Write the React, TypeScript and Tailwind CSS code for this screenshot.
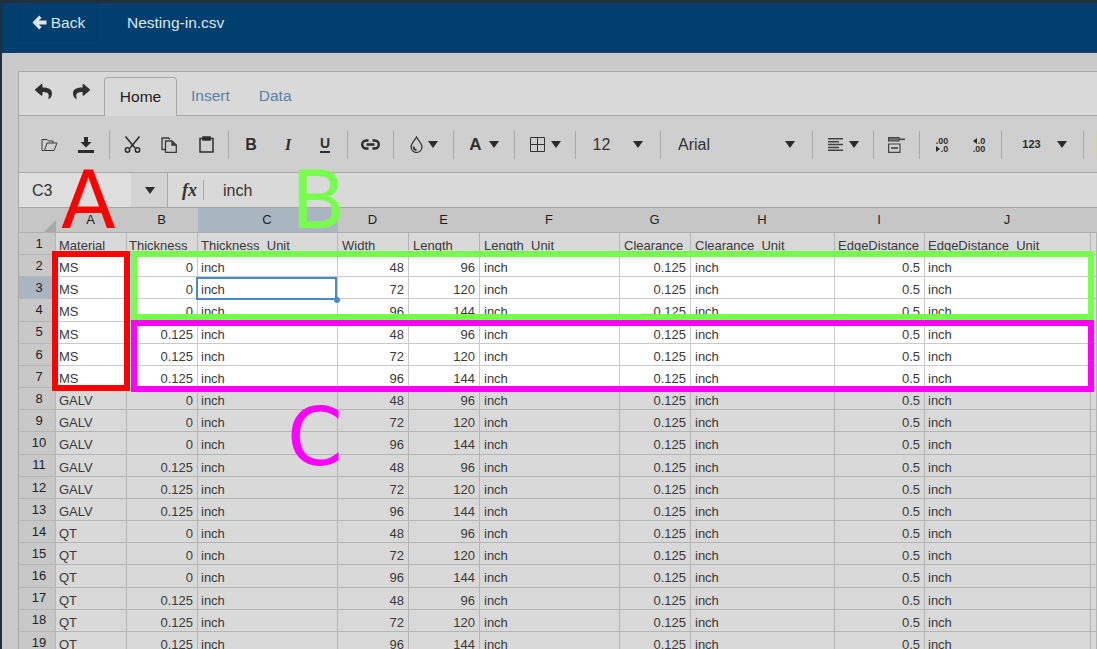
import { ReactNode } from "react";
import { FaReply, FaShare } from "react-icons/fa";

const columns = ["A", "B", "C", "D", "E", "F", "G", "H", "I", "J", ""];
const headers = ["Material", "Thickness", "Thickness_Unit", "Width", "Length", "Length_Unit", "Clearance", "Clearance_Unit", "EdgeDistance", "EdgeDistance_Unit", ""];
const gridCols = "grid grid-cols-[37px_71px_71px_140px_71px_71px_140px_71px_144px_90px_166px_1fr]";

const thick = ["0", "0", "0", "0.125", "0.125", "0.125"];
const widths = ["48", "72", "96"];
const lengths = ["96", "120", "144"];

function rowData(i: number) {
  const material = i < 6 ? "MS" : i < 12 ? "GALV" : "QT";
  return [material, thick[i % 6], "inch", widths[i % 3], lengths[i % 3], "inch", "0.125", "inch", "0.5", "inch", ""];
}

function Caret() {
  return <span className="h-0 w-0 border-x-[5px] border-t-[7px] border-x-transparent border-t-[#2b2b2b]" />;
}

function Group({ className, children }: { className: string; children: ReactNode }) {
  return <div className={`flex h-7 shrink-0 items-center border-r border-[#a8a8a8] ${className}`}>{children}</div>;
}

function Btn({ children }: { children: ReactNode }) {
  return <div className="flex h-7 w-[37px] items-center justify-center text-[#2f2f2f]">{children}</div>;
}

function Cell({ text, index, lit, head }: { text: string; index: number; lit: boolean; head: boolean }) {
  const right = !head && (index === 1 || index === 3 || index === 4 || index === 6 || index === 8);
  let pad = "pl-[4px]";
  if (right) pad = "justify-end pr-1";
  else if (index === 0 || index === 2 || index === 9) pad = "pl-[3px]";
  else if (head && index === 1) pad = "pl-[2px]";
  else if (head && index === 8) pad = "pl-[3px]";
  return (
    <div
      className={`flex overflow-hidden whitespace-nowrap border-r border-b pt-[4px] text-[13px] leading-[18px] text-[#3a3a3a] ${pad} ${
        lit ? "border-[#c9c9c9] bg-white" : "border-[#b5b5b5] bg-[#d9d9d9]"
      }`}
    >
      {text}
    </div>
  );
}

function Row({ n, cells, lit }: { n: number; cells: string[]; lit: boolean }) {
  return (
    <div className={`${gridCols} h-[22.17px]`}>
      <div
        className={`flex items-center justify-center border-r border-b border-[#b5b5b5] pl-1 text-[13px] text-[#222] ${
          n === 3 ? "bg-[#a9b6c1]" : "bg-[#c8c8c8]"
        }`}
      >
        {n}
      </div>
      {cells.map((c, i) => (
        <Cell key={i} text={c} index={i} lit={lit && i < 10} head={n === 1} />
      ))}
    </div>
  );
}

export default function App() {
  return (
    <div className="relative h-[649px] w-[1097px] overflow-hidden bg-[#22303c] pt-[3px] pl-[2px] font-['Liberation_Sans',sans-serif]">
      <header className="flex h-[50px] items-start bg-[#003f6e] pl-4 text-[15.5px] text-[#dde6ec]">
        <div className="mt-px flex h-[37px] w-[80px] items-center justify-center gap-1 border border-[#00396a] pl-px">
          <svg width="15" height="15" viewBox="0 0 15 15" fill="#dde6ec">
            <path d="M7.2 .5 9.600 2.900 6.800 5.500H14.500V9.500H6.800L9.600 12.100 7.200 14.500 .5 7.500Z" />
          </svg>
          Back
        </div>
        <div className="mt-px ml-[29px] flex h-[37px] items-center">Nesting-in.csv</div>
      </header>

      <main className="h-[596px] bg-[#cacaca] pt-[18px] pl-4">
        <section className="border-t border-l border-[#a8a8a8] bg-[#d9d9d9]">
          {/* tabs */}
          <div className="flex h-[43px] items-end pl-[85px] text-[15.5px]">
            <div className="absolute top-[83px] left-[35px] flex gap-[21px] text-[17px] text-[#2f2f2f]">
              <FaReply />
              <FaShare />
            </div>
            <div className="-mb-px flex h-[39px] w-[73px] items-center justify-center rounded-t border border-b-0 border-[#a8a8a8] bg-[#d9d9d9] pb-px text-[#222]">
              Home
            </div>
            <div className="ml-[14px] flex h-[39px] items-center text-[#5a80aa]">Insert</div>
            <div className="ml-[29px] flex h-[39px] items-center text-[#5a80aa]">Data</div>
          </div>

          {/* ribbon */}
          <div className="flex h-[58px] items-center border-y border-[#a8a8a8] bg-[#cfcfcf] pt-px">
            <Group className="w-[91px] justify-center pl-[7px]">
              <Btn>
                <svg width="17" height="13" viewBox="0 0 17 13" fill="none" stroke="#3a3a3a" strokeWidth="1">
                  <path d="M3.500 12.500H1V1.500H6L7.500 3H12V5M3.500 12.500L6 5H16L13 12.500Z" />
                </svg>
              </Btn>
              <Btn>
                <svg width="18" height="16" viewBox="0 0 18 16" fill="#2b2b2b">
                  <path d="M7 0H11V5H14.500L9 10.500 3.500 5H7ZM1 13H17V16H1Z" />
                </svg>
              </Btn>
            </Group>
            <Group className="w-[119px] justify-center">
              <Btn>
                <svg width="17" height="17" viewBox="0 0 17 17" fill="none" stroke="#2b2b2b" strokeWidth="1.500">
                  <path d="M1.500 0.500 11 12M15.500 0.500 6 12" />
                  <circle cx="3.500" cy="14" r="2.200" />
                  <circle cx="13.500" cy="14" r="2.200" />
                </svg>
              </Btn>
              <Btn>
                <svg width="16" height="16" viewBox="0 0 16 16" fill="none" stroke="#3a3a3a" strokeWidth="1.300">
                  <path d="M4.500 12.500H1V1H7.500L9 2.500" />
                  <path d="M4.500 4H11L15.300 8V15.300H4.500Z" />
                  <path d="M11 4V8H15.300" fill="#3a3a3a" />
                </svg>
              </Btn>
              <Btn>
                <svg width="15" height="17" viewBox="0 0 15 17" fill="none" stroke="#2f2f2f" strokeWidth="1.500">
                  <path d="M4 2.500H1V16H14V2.500H11" />
                  <path d="M4 1H11V4H4Z" fill="#2f2f2f" />
                </svg>
              </Btn>
            </Group>
            <Group className="w-[119px] justify-center text-[16px]">
              <Btn>
                <b>B</b>
              </Btn>
              <Btn>
                <i className="font-['Liberation_Serif',serif] font-bold">I</i>
              </Btn>
              <Btn>
                <span className="border-b-2 border-[#2f2f2f] text-[14px] leading-[15px] font-bold">U</span>
              </Btn>
            </Group>
            <Group className="w-[46px] justify-center">
              <svg width="19" height="11" viewBox="0 0 19 11" fill="none" stroke="#2b2b2b" strokeWidth="2.400">
                <path d="M7.500 1.500H5.200A4 4 0 0 0 5.200 9.500H7.500M11.500 1.500H13.800A4 4 0 0 1 13.800 9.500H11.500M5.500 5.500H13.500" />
              </svg>
            </Group>
            <Group className="w-[60px] justify-center gap-[5px]">
              <svg width="13" height="17" viewBox="0 0 13 17" fill="none" stroke="#333" strokeWidth="1.200">
                <path d="M6.500 1C8 4 12 7.500 12 11A5.500 5.500 0 0 1 1 11C1 7.500 5 4 6.500 1Z" />
                <path d="M3.500 10.500C3.500 13 5 14 6.500 14" strokeWidth="1.800" />
              </svg>
              <Caret />
            </Group>
            <Group className="w-[61px] justify-center gap-[7px] text-[17px] font-bold text-[#2f2f2f]">
              A
              <Caret />
            </Group>
            <Group className="w-[61px] justify-center gap-[6px]">
              <svg width="15" height="15" viewBox="0 0 15 15" fill="none" stroke="#333" strokeWidth="1">
                <path d="M.5.500H14.500V14.500H.5ZM7.500.500V14.500M.5 7.500H14.500" />
              </svg>
              <Caret />
            </Group>
            <Group className="w-[85px] justify-center gap-[23px] text-[16px] text-[#333]">
              12
              <Caret />
            </Group>
            <Group className="w-[152px] justify-between pr-[17px] pl-[17px] text-[16px] text-[#333]">
              Arial
              <Caret />
            </Group>
            <Group className="w-[61px] justify-center gap-[6px]">
              <svg width="15" height="13" viewBox="0 0 15 13" fill="#444">
                <path d="M0 0H15V1.500H0ZM0 2.900H11V4.400H0ZM0 5.800H15V7.300H0ZM0 8.700H11V10.200H0ZM0 11.500H15V13H0Z" />
              </svg>
              <Caret />
            </Group>
            <Group className="w-[46px] justify-center">
              <svg width="17" height="16" viewBox="0 0 17 16" fill="none" stroke="#444" strokeWidth="1.200">
                <path d="M.6.6H11V4H.6Z" fill="#777" />
                <path d="M11 2.300H17" strokeWidth="1.600" />
                <path d="M.6 7H12V15.400H.6Z" />
                <path d="M3 11H10" strokeWidth="1.600" />
              </svg>
            </Group>
            <Group className="w-[82px] justify-center text-[9px] leading-[8px] font-bold text-[#333]">
              <Btn>
                <span className="flex flex-col items-end">
                  <span>.00</span>
                  <span className="flex items-center gap-px">
                    <span className="h-0 w-0 border-y-[3.5px] border-l-[4px] border-y-transparent border-l-[#2b2b2b]" />
                    .0
                  </span>
                </span>
              </Btn>
              <Btn>
                <span className="flex flex-col items-end">
                  <span className="flex items-center gap-px">
                    <span className="h-0 w-0 border-y-[3.5px] border-r-[4px] border-y-transparent border-r-[#2b2b2b]" />
                    .0
                  </span>
                  <span>.00</span>
                </span>
              </Btn>
            </Group>
            <Group className="w-[82px] justify-center gap-[16px] pl-1 text-[11px] font-bold text-[#2b2b2b]">
              123
              <Caret />
            </Group>
            <div className="ml-[12px] h-7 w-[2px] bg-[#d8d488]" />
          </div>

          {/* formula bar */}
          <div className="flex h-[35px] items-center border-b border-[#a8a8a8] text-[16px] text-[#333]">
            <div className="flex h-full w-[112px] items-center bg-[#dedede] pt-px pl-[13px]">C3</div>
            <div className="flex h-full w-[37px] items-center justify-center border-r border-[#a8a8a8] bg-[#d3d3d3] pl-[2px]">
              <Caret />
            </div>
            <div className="ml-[14px] flex h-[20px] w-[22px] items-center border-r border-[#a8a8a8] font-['Liberation_Serif',serif] text-[18px] font-bold italic">
              fx
            </div>
            <div className="ml-[19px] pt-px">inch</div>
          </div>

          {/* sheet */}
          <div className={`${gridCols} relative h-[24px] bg-[#c6c6c6] text-[13px] text-[#1f1f1f]`}>
            <div className="relative">
              <svg className="absolute right-0 bottom-0" width="12" height="12" viewBox="0 0 12 12" fill="#a8a8a8">
                <path d="M12 0V12H0Z" />
              </svg>
            </div>
            {columns.map((c, i) => (
              <div key={i} className={`flex items-center justify-center pr-[2px] ${c === "C" ? "bg-[#a9b6c1]" : ""}`}>
                {c}
              </div>
            ))}
          </div>
          <div className="relative border-t border-[#b0b0b0]">
            <Row n={1} cells={headers} lit={false} />
            {Array.from({ length: 18 }, (_, i) => (
              <Row key={i} n={i + 2} cells={rowData(i)} lit={i < 6} />
            ))}
            {/* active cell */}
            <div className="absolute top-[44px] left-[177px] h-[23px] w-[141px] border-2 border-[#4a8ac7]">
              <span className="absolute -right-[5px] -bottom-[5px] h-[6px] w-[6px] rounded-full bg-[#4a8ac7]" />
            </div>
          </div>
        </section>
      </main>

      {/* annotations drawn on top of the screenshot */}
      <div className="absolute top-[251px] left-[52px] h-[140px] w-[78px] border-[6px] border-[#ff0000]" />
      <div className="absolute top-[251px] left-[131px] h-[69px] w-[963px] border-[6px] border-[#77ff4d]" />
      <div className="absolute top-[320px] left-[131px] h-[72px] w-[963px] border-[6px] border-[#ff00ff]" />
      <div className="absolute top-[172px] left-[61px] font-['DejaVu_Sans',sans-serif] text-[80px] leading-[58px] text-[#ff0000]">A</div>
      <div className="absolute top-[172px] left-[291px] font-['DejaVu_Sans',sans-serif] text-[80px] leading-[58px] text-[#77ff4d]">B</div>
      <div className="absolute top-[409px] left-[287px] font-['DejaVu_Sans',sans-serif] text-[80px] leading-[58px] text-[#ff00ff]">C</div>
    </div>
  );
}
